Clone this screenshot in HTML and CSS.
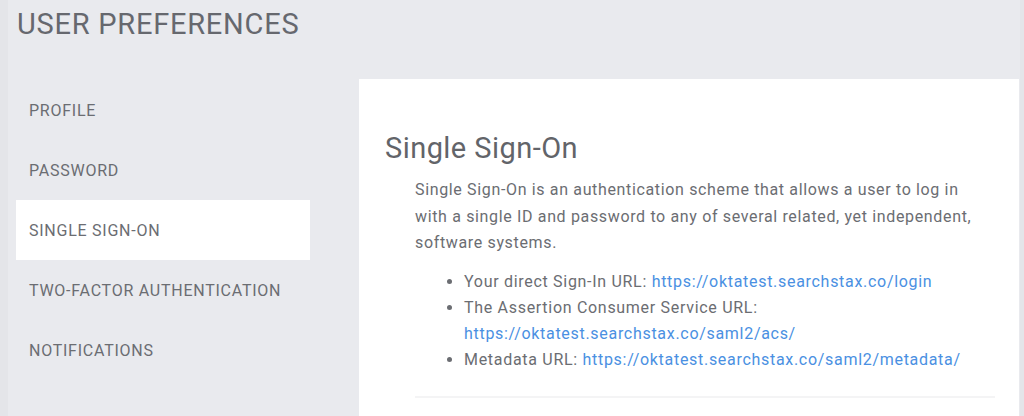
FILE: index.html
```html
<!DOCTYPE html>
<html>
<head>
<meta charset="utf-8">
<link rel="stylesheet" href="styles.css">
</head>
<body>
<div class="page">
  <header class="page-header">
    <h1 class="page-title">USER PREFERENCES</h1>
  </header>
  <div class="layout">
    <nav class="sidenav">
      <a class="nav-item">PROFILE</a>
      <a class="nav-item">PASSWORD</a>
      <a class="nav-item active">SINGLE SIGN-ON</a>
      <a class="nav-item">TWO-FACTOR AUTHENTICATION</a>
      <a class="nav-item">NOTIFICATIONS</a>
    </nav>
    <main class="card">
      <h2 class="card-title">Single Sign-On</h2>
      <div class="card-body">
        <p class="intro">Single Sign-On is an authentication scheme that allows a user to log in with a single ID and password to any of several related, yet independent, software systems.</p>
        <ul class="url-list">
          <li>Your direct Sign-In URL: <a class="link">https://oktatest.searchstax.co/login</a></li>
          <li>The Assertion Consumer Service URL: <a class="link">https://oktatest.searchstax.co/saml2/acs/</a></li>
          <li>Metadata URL: <a class="link">https://oktatest.searchstax.co/saml2/metadata/</a></li>
        </ul>
        <hr class="divider">
      </div>
    </main>
  </div>
</div>
</body>
</html>
```
FILE: styles.css
```css
* { box-sizing: border-box; }
html, body {
  margin: 0;
  padding: 0;
  height: 100%;
  overflow: hidden;
}
body {
  font-family: Roboto, "Liberation Sans", sans-serif;
  background: #e9eaee;
  color: #6b6d72;
}
.page {
  min-height: 416px;
  border-left: 8px solid #e4e5e9;
  border-right: 4px solid #e4e5e9;
}
.page-header {
  height: 79px;
  padding: 7px 0 0 9px;
}
.page-title {
  margin: 0;
  font-size: 29px;
  font-weight: 400;
  line-height: 34px;
  letter-spacing: 0.75px;
  color: #66686e;
}
.layout {
  display: flex;
  gap: 49px;
  padding-left: 8px;
}
.sidenav {
  width: 294px;
  flex: none;
  display: flex;
  flex-direction: column;
  padding-top: 1px;
}
.nav-item {
  display: block;
  height: 60px;
  line-height: 62px;
  padding-left: 13px;
  font-size: 16px;
  letter-spacing: 0.75px;
  color: #6b6d72;
}
.nav-item.active {
  background: #ffffff;
}
.card {
  flex: none;
  width: 660px;
  background: #ffffff;
  min-height: 340px;
  padding: 49px 24px 0 26px;
}
.card-title {
  margin: 0;
  font-size: 29px;
  font-weight: 400;
  line-height: 40px;
  letter-spacing: 0.45px;
  color: #626469;
}
.card-body {
  margin-left: 30px;
  margin-top: 9px;
}
.intro {
  margin: 0;
  font-size: 16px;
  line-height: 26.5px;
  letter-spacing: 0.65px;
  color: #6b6d72;
}
.url-list {
  margin: 12px 0 0 0;
  padding-left: 49px;
  font-size: 16px;
  line-height: 26px;
  letter-spacing: 0.7px;
  color: #6b6d72;
}
.link {
  color: #4a90e2;
}
.divider {
  border: 0;
  border-top: 2px solid #f4f4f5;
  margin: 23px 0 0 0;
}
```
